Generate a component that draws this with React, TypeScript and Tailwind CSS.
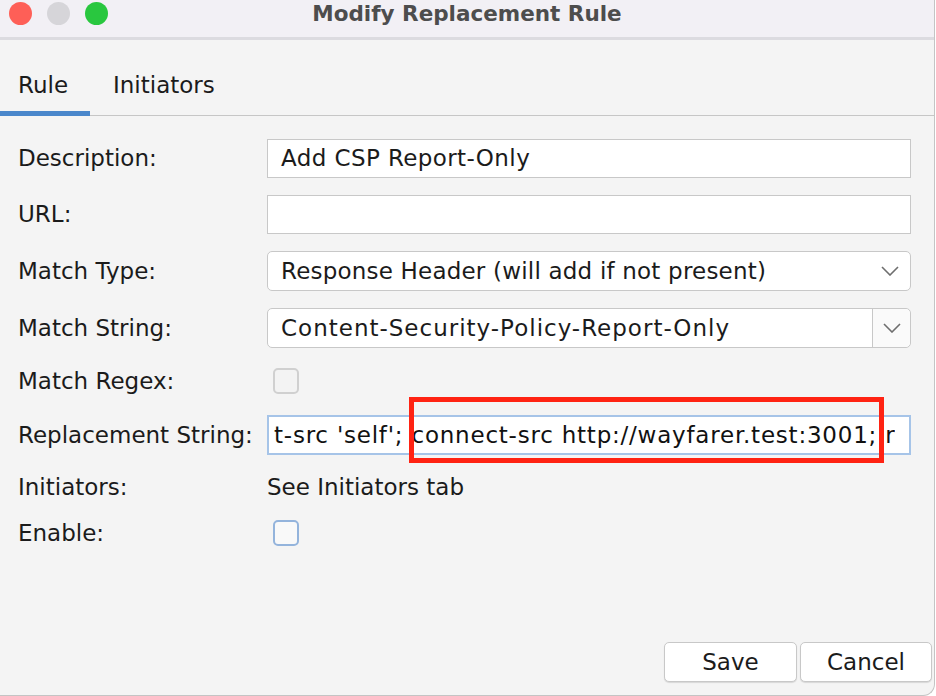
import React from "react"

const font = { fontFamily: '"DejaVu Sans", "Liberation Sans", sans-serif' }

function Chevron() {
  return (
    <svg width="18" height="10" viewBox="0 0 18 10" fill="none">
      <polyline points="1,1 9,9 17,1" stroke="#6e6e6e" strokeWidth="1.6" />
    </svg>
  )
}

function Label({ children }: { children: React.ReactNode }) {
  return <div className="w-[249px] shrink-0 text-[23px] text-[#1b1b1b]">{children}</div>
}

function TextField({ value }: { value?: string }) {
  return (
    <div className="flex h-[39px] w-[644px] items-center border border-[#c8c8c8] bg-white pl-[13px] text-[23px] tracking-[0.4px] text-[#1b1b1b]">
      {value}
    </div>
  )
}

function Checkbox({ focused }: { focused?: boolean }) {
  return (
    <div
      className={
        focused
          ? "ml-[6px] h-[26px] w-[26px] rounded-[5px] border-2 border-[#94b4dc] bg-[#f9f9f9]"
          : "ml-[6px] h-[26px] w-[26px] rounded-[5px] border-2 border-[#d0d0d0] bg-[#f3f3f3]"
      }
    />
  )
}

export default function App() {
  return (
    <div className="h-[696px] w-[936px] overflow-hidden bg-white" style={font}>
      <div className="flex h-[696px] w-[935px] flex-col rounded-br-[12px] border-r border-b border-[#c4c4c4] bg-[#f4f4f4]">
        {/* title bar */}
        <div className="relative flex h-[37px] shrink-0 items-start bg-[#f2f0f5]">
          <div className="flex gap-[15px] pl-[9px] pt-[2px]">
            <div className="h-[23px] w-[23px] rounded-full bg-[#fe5f57]" />
            <div className="h-[23px] w-[23px] rounded-full bg-[#d6d5d9]" />
            <div className="h-[23px] w-[23px] rounded-full bg-[#29c73f]" />
          </div>
          <div className="absolute inset-x-0 top-0 text-center text-[21.5px] font-bold leading-[27px] text-[#4d4d4d]">
            Modify Replacement Rule
          </div>
        </div>
        <div className="h-[3px] shrink-0 bg-[#dcdbe0]" />

        {/* tabs */}
        <div className="flex h-[76px] shrink-0 items-end border-b border-[#c6c6c6]">
          <div className="flex h-[76px] w-[90px] flex-col">
            <div className="flex flex-1 items-center pl-[18px] pt-[20px] text-[23px] text-[#1b1b1b]">Rule</div>
            <div className="-mb-px h-[5px] bg-[#4a87cb]" />
          </div>
          <div className="flex h-[76px] items-center pb-[4px] pl-[23px] pt-[20px] text-[23px] text-[#1b1b1b]">Initiators</div>
        </div>

        {/* form */}
        <div className="flex flex-col pl-[18px]">
          <div className="mt-[23px] flex h-[39px] items-center">
            <Label>Description:</Label>
            <TextField value="Add CSP Report-Only" />
          </div>
          <div className="mt-[17px] flex h-[39px] items-center">
            <Label>URL:</Label>
            <TextField />
          </div>
          <div className="mt-[17px] flex h-[40px] items-center">
            <Label>Match Type:</Label>
            <div className="flex h-[40px] w-[644px] items-center justify-between rounded-[5px] border border-[#c8c8c8] bg-white pl-[13px] pr-[11px] text-[23px] tracking-[0.2px] text-[#1b1b1b]">
              <span>Response Header (will add if not present)</span>
              <Chevron />
            </div>
          </div>
          <div className="mt-[17px] flex h-[40px] items-center">
            <Label>Match String:</Label>
            <div className="flex h-[40px] w-[644px] items-stretch rounded-[5px] border border-[#c8c8c8] bg-white text-[23px] text-[#1b1b1b]">
              <div className="flex flex-1 items-center pl-[13px] tracking-[1px]">Content-Security-Policy-Report-Only</div>
              <div className="flex w-[38px] items-center justify-center rounded-r-[5px] border-l border-[#c8c8c8] bg-[#fafafa]">
                <Chevron />
              </div>
            </div>
          </div>
          <div className="mt-[13px] flex h-[40px] items-center">
            <Label>Match Regex:</Label>
            <Checkbox />
          </div>
          <div className="mt-[14px] flex h-[40px] items-center">
            <Label>Replacement String:</Label>
            <div className="relative flex h-[40px] w-[644px] items-center overflow-visible border-2 border-[#a6c4e8] bg-white pl-[5px] text-[23px] text-[#111111]">
              <span className="overflow-hidden whitespace-nowrap tracking-[0.78px]">
                t-src 'self'; connect-src http://wayfarer.test:3001; r
              </span>
              <div className="absolute left-[140px] top-[-20px] h-[66px] w-[475px] border-[5px] border-[#ff2313]" />
            </div>
          </div>
          <div className="mt-[12px] flex h-[40px] items-center">
            <Label>Initiators:</Label>
            <div className="text-[23px] text-[#1b1b1b]">See Initiators tab</div>
          </div>
          <div className="mt-[6px] flex h-[40px] items-center">
            <Label>Enable:</Label>
            <Checkbox focused />
          </div>
        </div>

        {/* buttons */}
        <div className="mt-auto flex justify-end gap-[3px] pb-[13px] pr-[2px]">
          <div className="flex h-[40px] w-[133px] items-center justify-center rounded-[5px] border border-[#c8c8c8] bg-white text-[23px] text-[#1b1b1b] shadow-[0_1px_1px_rgba(0,0,0,0.12)]">
            Save
          </div>
          <div className="flex h-[40px] w-[132px] items-center justify-center rounded-[5px] border border-[#c8c8c8] bg-white text-[23px] text-[#1b1b1b] shadow-[0_1px_1px_rgba(0,0,0,0.12)]">
            Cancel
          </div>
        </div>
      </div>
    </div>
  )
}
